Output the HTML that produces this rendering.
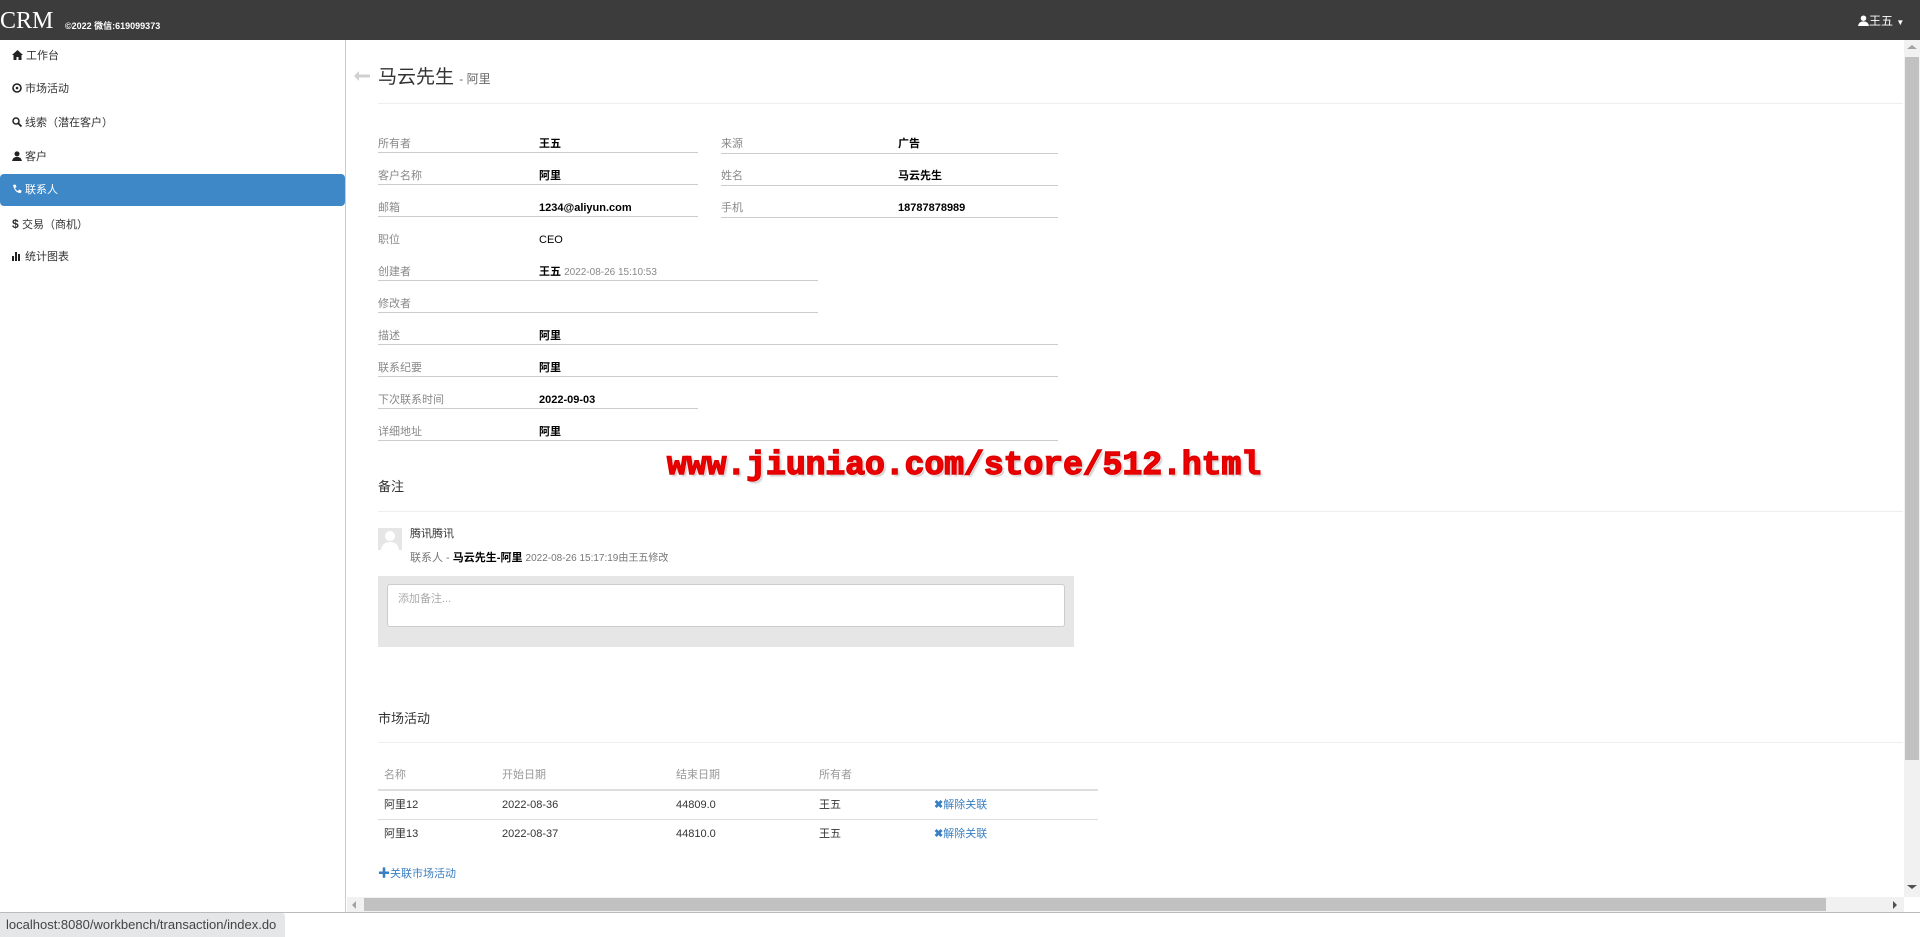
<!DOCTYPE html>
<html><head><meta charset="utf-8"><style>
*{margin:0;padding:0;box-sizing:border-box}
body{width:1920px;height:937px;overflow:hidden;background:#fff;font-family:"Liberation Sans","Noto Sans CJK SC",sans-serif;font-size:11px;color:#333;position:relative}
.a{position:absolute;white-space:nowrap;line-height:14px}
.top{position:absolute;left:0;top:0;width:1920px;height:40px;background:#3c3c3c}
.side{position:absolute;left:0;top:40px;width:346px;height:872px;border-right:1px solid #ccc}
.nav{position:absolute;left:12px;font-size:11px;color:#333;line-height:14px}
.lbl{color:#888;font-size:11px}
.val{color:#000;font-weight:bold;font-size:11px}
.ul{position:absolute;height:1px;background:#ccc}
.hr{position:absolute;height:1px;background:#eee;left:378px;width:1525px}
.th{color:#999;font-size:11px}
.link{color:#3a7fc1}
</style></head><body>
<div class="top"></div>
<div class="a" style="left:0;top:8px;color:#fff;font-family:'Liberation Serif',serif;font-size:24px;line-height:26px">CRM</div>
<div class="a" style="left:65px;top:19px;color:#fff;font-size:9px;font-weight:bold">©2022 微信:619099373</div>
<div class="a" style="left:1858px;top:14px;color:#fff;font-size:12px"><svg width="11" height="11" viewBox="0 0 12 12" style="vertical-align:-1px"><circle cx="6" cy="3.5" r="3" fill="#fff"/><path d="M0 12 Q1 7 6 7 Q11 7 12 12Z" fill="#fff"/></svg>王五 <span style="font-size:8px">▼</span></div>

<div class="side">
<div style="position:absolute;left:0;top:134px;width:345px;height:32px;background:#3f88c8;border-radius:4px"></div>
<div class="nav" style="top:9px"><svg width="11" height="10" viewBox="0 0 11 10" style="vertical-align:-1px"><path d="M5.5 0 L11 5 L9.5 5 L9.5 10 L6.5 10 L6.5 7 L4.5 7 L4.5 10 L1.5 10 L1.5 5 L0 5Z" fill="#222"/></svg> 工作台</div>
<div class="nav" style="top:42px"><svg width="10" height="10" viewBox="0 0 10 10" style="vertical-align:-1px"><circle cx="5" cy="5" r="4" fill="none" stroke="#222" stroke-width="1.6"/><circle cx="5" cy="5" r="1.3" fill="#222"/></svg> 市场活动</div>
<div class="nav" style="top:76px"><svg width="10" height="10" viewBox="0 0 10 10" style="vertical-align:-1px"><circle cx="4" cy="4" r="3" fill="none" stroke="#222" stroke-width="1.5"/><path d="M6 6 L9.5 9.5" stroke="#222" stroke-width="1.8"/></svg> 线索（潜在客户）</div>
<div class="nav" style="top:110px"><svg width="10" height="10" viewBox="0 0 12 12" style="vertical-align:-1px"><circle cx="6" cy="3.5" r="3" fill="#222"/><path d="M0 12 Q1 7 6 7 Q11 7 12 12Z" fill="#222"/></svg> 客户</div>
<div class="nav" style="top:143px;color:#fff"><svg width="10" height="10" viewBox="0 0 10 10" style="vertical-align:-1px"><path d="M1 1 L3.5 0.5 L4.5 3 L3 4 Q4 6.5 6 7 L7 5.5 L9.5 6.5 L9 9 Q3 9.5 1 1Z" fill="#fff"/></svg> 联系人</div>
<div class="nav" style="top:177px;font-weight:bold;font-size:12px">$ <span style="font-weight:normal;font-size:11px">交易（商机）</span></div>
<div class="nav" style="top:210px"><svg width="10" height="10" viewBox="0 0 10 10" style="vertical-align:-1px"><rect x="0" y="5" width="2" height="5" fill="#222"/><rect x="3" y="1" width="2" height="9" fill="#222"/><rect x="6" y="3" width="2" height="7" fill="#222"/></svg> 统计图表</div>
</div>

<svg class="a" style="left:354px;top:71px" width="16" height="10" viewBox="0 0 16 10"><path d="M5 0 L0 5 L5 10 L5 6.5 L16 6.5 L16 3.5 L5 3.5Z" fill="#d0d0d0"/></svg>
<div class="a" style="left:378px;top:66px;font-size:19px;line-height:24px;color:#333">马云先生 <span style="font-size:12px;color:#666">- 阿里</span></div>
<div class="hr" style="top:103px"></div>

<div class="a lbl" style="left:378px;top:137px">所有者</div><div class="a val" style="left:539px;top:137px">王五</div><div class="ul" style="left:378px;top:152px;width:320px"></div>
<div class="a lbl" style="left:721px;top:137px">来源</div><div class="a val" style="left:898px;top:137px">广告</div><div class="ul" style="left:721px;top:153px;width:337px"></div>
<div class="a lbl" style="left:378px;top:169px">客户名称</div><div class="a val" style="left:539px;top:169px">阿里</div><div class="ul" style="left:378px;top:184px;width:320px"></div>
<div class="a lbl" style="left:721px;top:169px">姓名</div><div class="a val" style="left:898px;top:169px">马云先生</div><div class="ul" style="left:721px;top:185px;width:337px"></div>
<div class="a lbl" style="left:378px;top:201px">邮箱</div><div class="a val" style="left:539px;top:201px">1234@aliyun.com</div><div class="ul" style="left:378px;top:216px;width:320px"></div>
<div class="a lbl" style="left:721px;top:201px">手机</div><div class="a val" style="left:898px;top:201px">18787878989</div><div class="ul" style="left:721px;top:217px;width:337px"></div>
<div class="a lbl" style="left:378px;top:233px">职位</div><div class="a" style="left:539px;top:233px;color:#000">CEO</div>
<div class="a lbl" style="left:378px;top:265px">创建者</div><div class="a val" style="left:539px;top:265px">王五 <span style="font-weight:normal;color:#888;font-size:10px">2022-08-26 15:10:53</span></div><div class="ul" style="left:378px;top:280px;width:440px"></div>
<div class="a lbl" style="left:378px;top:297px">修改者</div><div class="ul" style="left:378px;top:312px;width:440px"></div>
<div class="a lbl" style="left:378px;top:329px">描述</div><div class="a val" style="left:539px;top:329px">阿里</div><div class="ul" style="left:378px;top:344px;width:680px"></div>
<div class="a lbl" style="left:378px;top:361px">联系纪要</div><div class="a val" style="left:539px;top:361px">阿里</div><div class="ul" style="left:378px;top:376px;width:680px"></div>
<div class="a lbl" style="left:378px;top:393px">下次联系时间</div><div class="a val" style="left:539px;top:393px">2022-09-03</div><div class="ul" style="left:378px;top:408px;width:320px"></div>
<div class="a lbl" style="left:378px;top:425px">详细地址</div><div class="a val" style="left:539px;top:425px">阿里</div><div class="ul" style="left:378px;top:440px;width:680px"></div>

<div class="a" style="left:667px;top:448px;font-family:'Liberation Mono',monospace;font-weight:bold;font-size:33px;line-height:36px;color:#e00;-webkit-text-stroke:1.5px #d00;text-shadow:1px 1px 0 #fff,-1px -1px 0 #fff,2px 2px 2px #bbb">www.jiuniao.com/store/512.html</div>

<div class="a" style="left:378px;top:479px;font-size:13px;line-height:16px;color:#333">备注</div>
<div class="hr" style="top:511px"></div>
<div class="a" style="left:378px;top:528px;width:24px;height:22px;background:#e6e6e6"><svg width="24" height="22" viewBox="0 0 24 22"><circle cx="12" cy="8" r="5" fill="#fff"/><path d="M3 22 Q4 14 12 14 Q20 14 21 22Z" fill="#fff"/></svg></div>
<div class="a" style="left:410px;top:527px;color:#333">腾讯腾讯</div>
<div class="a" style="left:410px;top:551px;color:#777">联系人 - <b style="color:#000">马云先生-阿里</b> <span style="font-size:10px">2022-08-26 15:17:19由王五修改</span></div>
<div class="a" style="left:378px;top:576px;width:696px;height:71px;background:#e6e6e6"></div>
<div class="a" style="left:387px;top:584px;width:678px;height:43px;background:#fff;border:1px solid #ccc;border-radius:3px;color:#aaa;padding:7px 10px">添加备注...</div>

<div class="a" style="left:378px;top:711px;font-size:13px;line-height:16px;color:#333">市场活动</div>
<div class="hr" style="top:742px"></div>
<div class="a th" style="left:384px;top:768px">名称</div>
<div class="a th" style="left:502px;top:768px">开始日期</div>
<div class="a th" style="left:676px;top:768px">结束日期</div>
<div class="a th" style="left:819px;top:768px">所有者</div>
<div class="ul" style="left:378px;top:789px;width:720px;background:#ddd;height:2px"></div>
<div class="a" style="left:384px;top:798px">阿里12</div><div class="a" style="left:502px;top:798px">2022-08-36</div><div class="a" style="left:676px;top:798px">44809.0</div><div class="a" style="left:819px;top:798px">王五</div><div class="a link" style="left:934px;top:798px"><b>✖</b>解除关联</div>
<div class="ul" style="left:378px;top:819px;width:720px;background:#ddd"></div>
<div class="a" style="left:384px;top:827px">阿里13</div><div class="a" style="left:502px;top:827px">2022-08-37</div><div class="a" style="left:676px;top:827px">44810.0</div><div class="a" style="left:819px;top:827px">王五</div><div class="a link" style="left:934px;top:827px"><b>✖</b>解除关联</div>
<div class="a link" style="left:378px;top:866px"><b style="font-size:12px">✚</b>关联市场活动</div>

<div class="a" style="left:1904px;top:40px;width:16px;height:857px;background:#f1f1f1"></div>
<div class="a" style="left:1905px;top:57px;width:14px;height:703px;background:#c1c1c1"></div>
<div class="a" style="left:1907px;top:45px;width:0;height:0;border-left:5px solid transparent;border-right:5px solid transparent;border-bottom:4px solid #a3a3a3"></div>
<div class="a" style="left:1907px;top:885px;width:0;height:0;border-left:5px solid transparent;border-right:5px solid transparent;border-top:4px solid #505050"></div>
<div class="a" style="left:347px;top:897px;width:1557px;height:15px;background:#f1f1f1"></div>
<div class="a" style="left:364px;top:898px;width:1462px;height:13px;background:#c1c1c1"></div>
<div class="a" style="left:352px;top:901px;width:0;height:0;border-top:4px solid transparent;border-bottom:4px solid transparent;border-right:4px solid #a3a3a3"></div>
<div class="a" style="left:1893px;top:901px;width:0;height:0;border-top:4px solid transparent;border-bottom:4px solid transparent;border-left:4px solid #505050"></div>
<div class="a" style="left:0;top:912px;width:1920px;height:1px;background:#bbb"></div>
<div class="a" style="left:0;top:913px;width:285px;height:24px;background:#e5e6e8;border-radius:0 3px 0 0;color:#444;font-size:13px;line-height:16px;padding:4px 6px">localhost:8080/workbench/transaction/index.do</div>
</body></html>
